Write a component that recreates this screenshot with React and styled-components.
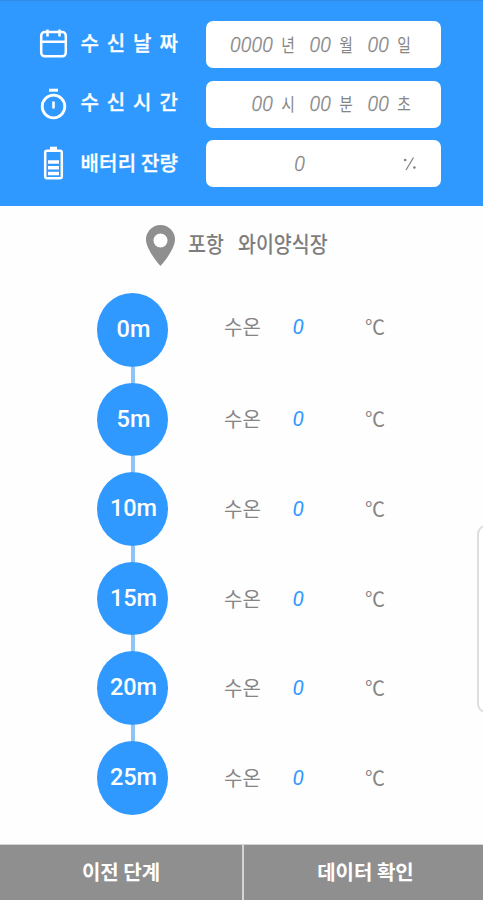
import styled, { createGlobalStyle } from 'styled-components'

const colors = {
  blue: '#3099ff',
  line: '#8dc4f8',
  grey: '#8f8f8f',
  text: '#858585'
}

const GlobalStyle = createGlobalStyle`
  * {
    box-sizing: border-box;
  }

  body {
    margin: 0;
    background: #fff;
    font-family: 'Noto Sans CJK KR', sans-serif;
  }
`

const Screen = styled.div`
  position: relative;
  display: flex;
  flex-direction: column;
  width: 483px;
  height: 900px;
  overflow: hidden;
  background: #fefefe;
`

const Header = styled.header`
  display: flex;
  flex-direction: column;
  gap: 12.5px;
  height: 206px;
  padding: 20px 42px 0 38px;
  background: ${colors.blue};
  border-top: 1px solid #318be4;
`

const HeaderRow = styled.div`
  display: grid;
  grid-template-columns: 31px 126px 234.5px;
  column-gap: 5.5px;
  align-items: center;
  height: 47px;
`

const HeaderIcon = styled.svg`
  display: block;
  width: 31px;
  height: 36px;
  fill: none;
  stroke: #fff;
  stroke-width: 2.5;
`

const Label = styled.div`
  padding-left: 6px;
  color: #fff;
  font-size: 20px;
  font-weight: 500;
  line-height: 30px;
  white-space: nowrap;
  letter-spacing: ${({ $spaced }) => ($spaced ? '1.7px' : '0.2px')};
  padding-bottom: ${({ $spaced }) => ($spaced ? '4px' : '2px')};
  -webkit-text-stroke: 0.3px #fff;
`

const Field = styled.div`
  display: grid;
  grid-template-columns: 44px 17px 29px 17px 29px 17px;
  column-gap: 6px;
  align-items: center;
  height: 47px;
  padding-left: 23px;
  background: #fff;
  border-radius: 7px;
`

const Digits = styled.span`
  color: ${({ $color }) => $color || colors.text};
  font-family: Roboto, sans-serif;
  font-size: ${({ $color }) => ($color ? '21px' : '20px')};
  font-style: italic;
  font-weight: ${({ $color }) => ($color ? 400 : 300)};
  line-height: 24px;
  text-align: right;
  -webkit-text-stroke: ${({ $color }) => ($color ? 0 : '0.3px')};
`

const Unit = styled.span`
  color: ${colors.text};
  font-size: 18.5px;
  font-weight: 400;
  line-height: 24px;
  padding-bottom: 2px;
  transform: scaleX(0.8);
  transform-origin: 11px;
`

const Battery = styled(Field)`
  grid-template-columns: 11px 14px;
  column-gap: 98px;
  padding-left: 88px;
`

const Percent = styled.svg`
  width: 14px;
  height: 15px;
  fill: ${colors.text};
  stroke: ${colors.text};
  stroke-width: 1.3;
`

const Location = styled.div`
  display: flex;
  align-items: center;
  height: 78px;
  padding-left: 146px;
`

const Pin = styled.svg`
  width: 29px;
  height: 41px;
  fill: ${colors.grey};
`

const Place = styled.div`
  display: flex;
  gap: 16px;
  margin-left: 13px;
  padding-bottom: 6px;
  color: #7d7d7d;
  font-size: 22px;
  font-weight: 500;
  line-height: 32px;
  white-space: nowrap;
  transform: scaleX(0.885);
  transform-origin: left;
`

const Depths = styled.main`
  display: flex;
  flex-direction: column;
  flex: 1;
  gap: 16px;
  padding: 9px 0 0 97px;
`

const DepthRow = styled.div`
  display: grid;
  grid-template-columns: 71px auto;
  column-gap: 56px;
  align-items: center;
  justify-content: start;
  height: 73.6px;

  &:not(:last-child) > :first-child::after {
    content: '';
    position: absolute;
    top: 100%;
    left: 34px;
    width: 4px;
    height: 16px;
    background: ${colors.line};
  }
`

const Depth = styled.div`
  position: relative;
  display: flex;
  justify-content: center;
  width: 71px;
  height: 73.6px;
  padding-left: 2px;
  color: #fff;
  background: ${colors.blue};
  border-radius: 50%;
  font-family: Roboto, sans-serif;
  font-size: 23.5px;
  font-weight: 500;
  line-height: 72px;
`

const Reading = styled.div`
  display: grid;
  grid-template-columns: 37px 13px 20px;
  column-gap: 30px;
  align-items: center;
  padding-bottom: ${({ $raised }) => ($raised ? '6px' : '0')};
  color: ${colors.text};
  font-size: 20px;
  font-weight: 400;
  line-height: 30px;
`

const Celsius = styled.span`
  margin-left: 31px;
`

const Footer = styled.footer`
  display: grid;
  grid-template-columns: 242px 239px;
  column-gap: 2px;
  height: 56px;
  background: #d4d4d4;
  padding-top: 1px;
`

const FooterButton = styled.button`
  padding: 0 0 2px;
  border: 0;
  color: #fff;
  background: ${colors.grey};
  font-family: inherit;
  font-size: 20px;
  font-weight: 700;
  line-height: 30px;
`

const FooterLabel = styled.span`
  display: inline-block;
  padding-left: ${({ $indent }) => $indent || 0}px;
`

const EdgePanel = styled.aside`
  position: absolute;
  top: 525px;
  left: 477px;
  width: 30px;
  height: 188px;
  background: #fff;
  border: 2px solid #dedede;
  border-radius: 9px;
`

const depths = ['0m', '5m', '10m', '15m', '20m', '25m']

function CalendarIcon() {
  return (
    <HeaderIcon viewBox="0 2 31 36">
      <rect x="3.2" y="7" width="24.6" height="24.3" rx="3.5" />
      <path d="M3 16.7h25M9.5 4.5v7M21.5 4.5v7" />
    </HeaderIcon>
  )
}

function TimerIcon() {
  return (
    <HeaderIcon viewBox="0 0 31 36">
      <circle cx="15.5" cy="20.5" r="11.3" strokeWidth="2.8" />
      <path d="M11 4.2h9" strokeWidth="3" />
      <path d="M15.5 15.5v7" strokeWidth="2.6" />
    </HeaderIcon>
  )
}

function BatteryIcon() {
  return (
    <HeaderIcon viewBox="0 0.5 31 36">
      <rect x="7.2" y="5.2" width="16.6" height="27.6" rx="1.8" />
      <path d="M12 3h7" strokeWidth="3.6" />
      <path d="M10 16.5h11M10 22.2h11M10 28h11" strokeWidth="3.4" />
    </HeaderIcon>
  )
}

function App() {
  return (
    <>
      <GlobalStyle />
      <Screen>
        <Header>
          <HeaderRow>
            <CalendarIcon />
            <Label $spaced>수 신 날 짜</Label>
            <Field>
              <Digits>0000</Digits>
              <Unit>년</Unit>
              <Digits>00</Digits>
              <Unit>월</Unit>
              <Digits>00</Digits>
              <Unit>일</Unit>
            </Field>
          </HeaderRow>
          <HeaderRow>
            <TimerIcon />
            <Label $spaced>수 신 시 간</Label>
            <Field>
              <Digits>00</Digits>
              <Unit>시</Unit>
              <Digits>00</Digits>
              <Unit>분</Unit>
              <Digits>00</Digits>
              <Unit>초</Unit>
            </Field>
          </HeaderRow>
          <HeaderRow>
            <BatteryIcon />
            <Label>배터리 잔량</Label>
            <Battery>
              <Digits>0</Digits>
              <Percent viewBox="0 0 14 15" role="img" aria-label="%">
                <path d="M3 14 10.5 1.5" />
                <circle cx="2.2" cy="4" r="0.7" />
                <circle cx="11.4" cy="11.5" r="0.7" />
              </Percent>
            </Battery>
          </HeaderRow>
        </Header>

        <Location>
          <Pin viewBox="0 0 29 41">
            <path
              fillRule="evenodd"
              d="M14.5 0A14.5 14.5 0 0 0 0 14.5C0 25 14.5 41 14.5 41S29 25 29 14.5A14.5 14.5 0 0 0 14.5 0Zm0 8.5a7 7 0 1 1 0 14 7 7 0 0 1 0-14Z"
            />
          </Pin>
          <Place>
            <span>포항</span>
            <span>와이양식장</span>
          </Place>
        </Location>

        <Depths>
          {depths.map((depth, i) => (
            <DepthRow key={depth}>
              <Depth>{depth}</Depth>
              <Reading $raised={i === 0}>
                <span>수온</span>
                <Digits $color={colors.blue}>0</Digits>
                <Celsius>℃</Celsius>
              </Reading>
            </DepthRow>
          ))}
        </Depths>

        <Footer>
          <FooterButton>
            <FooterLabel>이전 단계</FooterLabel>
          </FooterButton>
          <FooterButton>
            <FooterLabel $indent={4}>데이터 확인</FooterLabel>
          </FooterButton>
        </Footer>
        <EdgePanel />
      </Screen>
    </>
  )
}

export default App
